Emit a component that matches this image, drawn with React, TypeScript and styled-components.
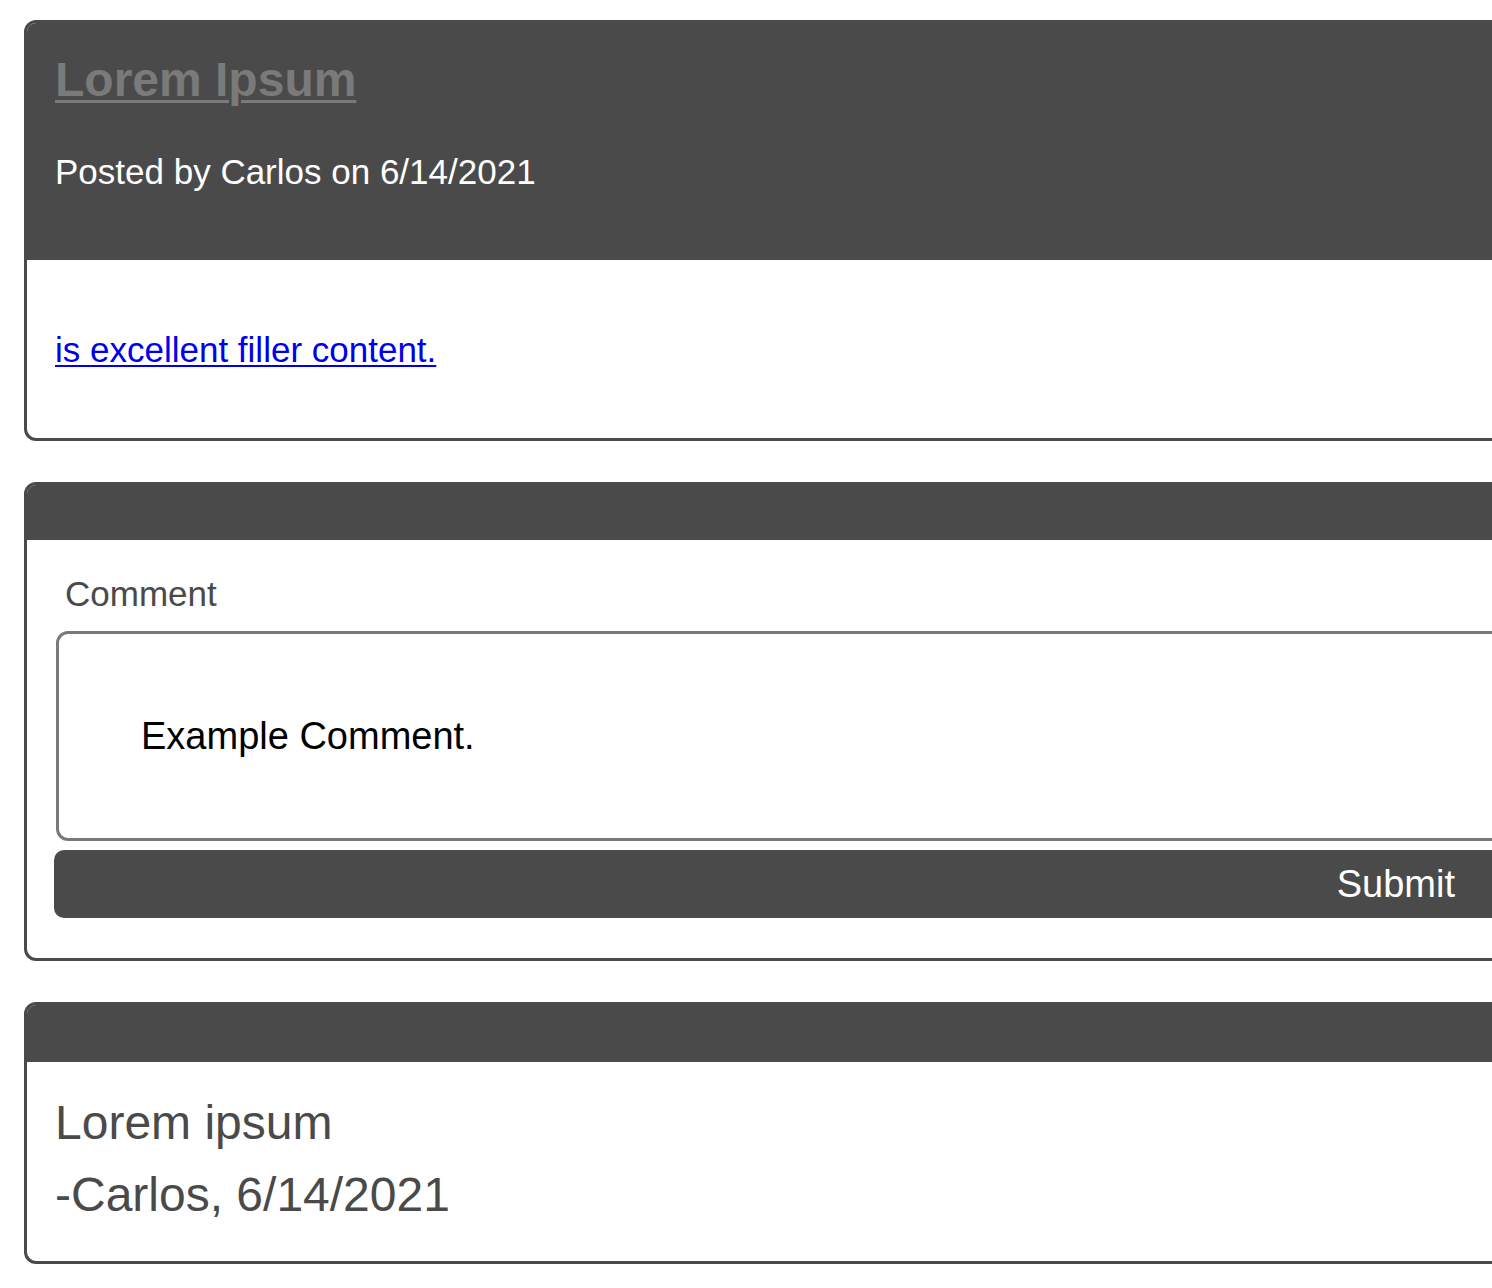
import React from "react";
import styled, { createGlobalStyle } from "styled-components";

const GlobalStyle = createGlobalStyle`
  html, body {
    margin: 0;
    padding: 0;
    overflow-x: hidden;
    background: #ffffff;
    font-family: "Liberation Sans", Arial, Helvetica, sans-serif;
  }
`;

const Viewport = styled.div`
  width: 100%;
  overflow: hidden;
`;

const Page = styled.div`
  display: flex;
  flex-direction: column;
  gap: 41px;
  padding: 20px 0 26px 24px;
  width: 1560px;
`;

const Card = styled.section`
  display: flex;
  flex-direction: column;
  border: 3px solid #4a4a4a;
  border-radius: 12px;
  overflow: hidden;
  background: #ffffff;
`;

const Header = styled.header<{ $height?: number }>`
  display: flex;
  flex-direction: column;
  background: #4a4a4a;
  margin-top: -3px;
  padding: ${(p) => (p.$height ? "0" : "32px 28px 68px")};
  height: ${(p) => (p.$height ? `${p.$height}px` : "auto")};
`;

const Title = styled.a`
  font-size: 48px;
  font-weight: bold;
  line-height: 55px;
  color: #7a7a7a;
  text-decoration: underline;
  text-decoration-thickness: 3px;
  text-underline-offset: 4px;
  align-self: flex-start;
`;

const Meta = styled.p`
  margin: 45px 0 0;
  font-size: 35px;
  line-height: 40px;
  color: #ffffff;
`;

const Body = styled.div<{ $pad: string }>`
  display: flex;
  flex-direction: column;
  padding: ${(p) => p.$pad};
`;

const FillerLink = styled.a`
  font-size: 35px;
  line-height: 40px;
  color: #0000ee;
  text-decoration: underline;
  text-decoration-thickness: 2px;
  text-underline-offset: 3px;
  align-self: flex-start;
`;

const Label = styled.label`
  font-size: 35px;
  line-height: 40px;
  color: #4a4a4a;
  padding-left: 10px;
  margin-bottom: 17px;
`;

const TextArea = styled.textarea`
  box-sizing: border-box;
  height: 210px;
  margin: 0 0 0 1px;
  padding: 80px 82px;
  border: 3px solid #7a7a7a;
  border-radius: 12px;
  font-family: "Liberation Sans", Arial, Helvetica, sans-serif;
  font-size: 38px;
  line-height: 44px;
  color: #000000;
  resize: none;
  overflow: hidden;
  outline: none;
`;

const SubmitButton = styled.button`
  box-sizing: border-box;
  margin: 9px 0 0 -1px;
  height: 68px;
  border: none;
  border-radius: 10px;
  background: #4a4a4a;
  color: #ffffff;
  font-family: "Liberation Sans", Arial, Helvetica, sans-serif;
  font-size: 38px;
  text-align: right;
  padding: 0 98px 0 0;
`;

const CommentText = styled.p`
  margin: 0;
  font-size: 48px;
  line-height: 55px;
  color: #4a4a4a;
`;

const CommentList = styled.div`
  display: flex;
  flex-direction: column;
  gap: 17px;
`;

export default function App() {
  return (
    <>
      <GlobalStyle />
      <Viewport>
        <Page>
          <Card>
            <Header>
              <Title href="#">Lorem Ipsum</Title>
              <Meta>Posted by Carlos on 6/14/2021</Meta>
            </Header>
            <Body $pad="70px 28px 68px">
              <FillerLink href="#">is excellent filler content.</FillerLink>
            </Body>
          </Card>

          <Card>
            <Header $height={58} />
            <Body $pad="34px 28px 40px">
              <Label htmlFor="comment">Comment</Label>
              <TextArea id="comment" rows={1} defaultValue="Example Comment." />
              <SubmitButton type="button">Submit</SubmitButton>
            </Body>
          </Card>

          <Card>
            <Header $height={60} />
            <Body $pad="33px 28px 39px">
              <CommentList>
                <CommentText>Lorem ipsum</CommentText>
                <CommentText>-Carlos, 6/14/2021</CommentText>
              </CommentList>
            </Body>
          </Card>
        </Page>
      </Viewport>
    </>
  );
}
